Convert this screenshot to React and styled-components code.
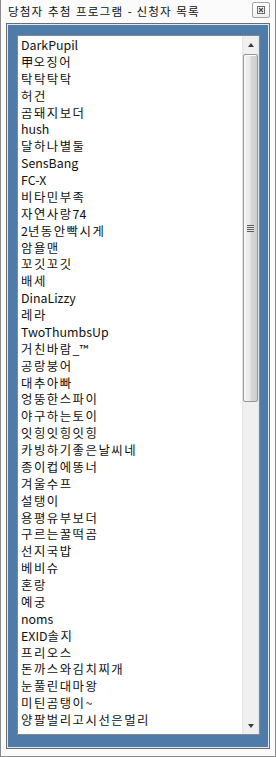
import React from 'react';
import styled, { createGlobalStyle } from 'styled-components';

const names = [
  'DarkPupil', '甲오징어', '탁탁탁탁', '허건', '곰돼지보더', 'hush', '달하나별둘',
  'SensBang', 'FC-X', '비타민부족', '자연사랑74', '2년동안빡시게', '암욜맨', '꼬깃꼬깃',
  '배세', 'DinaLizzy', '레라', 'TwoThumbsUp', '거친바람_™', '공랑붕어', '대추아빠',
  '엉뚱한스파이', '야구하는토이', '잇힝잇힝잇힝', '카빙하기좋은날씨네', '종이컵에똥너',
  '겨울수프', '설탱이', '용평유부보더', '구르는꿀떡곰', '선지국밥', '베비슈', '혼랑',
  '예궁', 'noms', 'EXID솔지', '프리오스', '돈까스와김치찌개', '눈풀린대마왕',
  '미틴곰탱이~', '양팔벌리고시선은멀리',
];

const GlobalStyle = createGlobalStyle`
  html, body {
    margin: 0;
    padding: 0;
    background: #ffffff;
  }
`;

const Window = styled.div`
  box-sizing: border-box;
  width: 276px;
  height: 757px;
  display: flex;
  flex-direction: column;
  background: #fbfbfb;
  border: 1px solid #8a8a8a;
  border-top: none;
  padding: 0 5px 7px 5px;
  font-family: "Noto Sans CJK KR", "Noto Sans", sans-serif;
`;

const TitleBar = styled.div`
  height: 23px;
  display: flex;
  align-items: center;
  justify-content: space-between;
  padding: 0 0 0 2px;
`;

const Title = styled.span`
  font-size: 11.6px;
  color: #111;
  word-spacing: 2px;
  margin-top: -2px;
`;

// Malgun Gothic sets hangul wider than Noto does, latin about the same
const Hangul = styled.span`
  letter-spacing: ${props => props.spacing}px;
`;

const CloseButton = styled.div`
  box-sizing: border-box;
  width: 18px;
  height: 16px;
  margin: -3px 0 0 0;
  border: 1px solid #a3a3a3;
  border-radius: 2px;
  background: linear-gradient(#ffffff, #f1f1f1);
  display: flex;
  align-items: center;
  justify-content: center;
`;

const Frame = styled.div`
  box-sizing: border-box;
  flex: 1;
  border: 1px solid #6c6c6c;
  box-shadow: inset 0 0 0 1px #dfe7f0;
  background: #4f7ba8;
  padding: 11px 9px 13px 10px;
  display: flex;
`;

const ListBox = styled.div`
  box-sizing: border-box;
  flex: 1;
  display: flex;
  background: #fff;
  border: 1px solid #828790;
  overflow: hidden;
`;

const Items = styled.div`
  flex: 1;
  padding: 1px 0 0 3px;
  overflow: hidden;
`;

const Item = styled.div`
  height: 16.875px;
  line-height: 16.875px;
  font-size: 12.4px;
  color: #111;
  white-space: nowrap;
`;

const ScrollBar = styled.div`
  width: 17px;
  display: flex;
  flex-direction: column;
  background: linear-gradient(90deg, #e3e3e3 0, #f0f0f0 2px, #f0f0f0 15px, #e3e3e3 17px);
`;

const ArrowButton = styled.div`
  height: 17px;
  display: flex;
  align-items: center;
  justify-content: center;
`;

const Arrow = styled.div`
  width: 0;
  height: 0;
  border-left: 3.5px solid transparent;
  border-right: 3.5px solid transparent;
  ${props => props.down
    ? 'border-top: 4px solid #3c3c3c;'
    : 'border-bottom: 4px solid #3c3c3c;'}
`;

const Track = styled.div`
  flex: 1;
  display: flex;
  flex-direction: column;
  align-items: center;
`;

const Thumb = styled.div`
  box-sizing: border-box;
  width: 15px;
  margin-top: ${props => props.offset}px;
  height: ${props => props.size}px;
  border: 1px solid #979797;
  border-radius: 2px;
  background: linear-gradient(90deg, #f3f3f3 0%, #e9e9e9 45%, #d8d8d8 55%, #cfcfcf 100%);
  box-shadow: inset 1px 1px 0 #fbfbfb;
  display: flex;
  align-items: center;
  justify-content: center;
`;

const Grip = styled.div`
  width: 7px;
  height: 7px;
  background: repeating-linear-gradient(#5a5a5a 0, #5a5a5a 1px, #e8e8e8 1px, #e8e8e8 2px);
`;

const Text = ({ children, spacing }) =>
  children.split(/([가-힣]+)/).filter(Boolean).map((part, i) =>
    /[가-힣]/.test(part)
      ? <Hangul key={i} spacing={spacing}>{part}</Hangul>
      : <React.Fragment key={i}>{part}</React.Fragment>
  );

export default function App() {
  return (
    <>
      <GlobalStyle />
      <Window>
        <TitleBar>
          <Title><Text spacing={1.1}>당첨자 추첨 프로그램 - 신청자 목록</Text></Title>
          <CloseButton>
            <svg width="8" height="8" viewBox="0 0 8 8">
              <rect x="0.5" y="0.5" width="7" height="7" fill="none" stroke="#6a6a6a" strokeWidth="1" />
              <path d="M2 2 L6 6 M6 2 L2 6" stroke="#4a4a4a" strokeWidth="1.2" />
            </svg>
          </CloseButton>
        </TitleBar>
        <Frame>
          <ListBox>
            <Items>
              {names.map(n => <Item key={n}><Text spacing={1.5}>{n}</Text></Item>)}
            </Items>
            <ScrollBar>
              <ArrowButton><Arrow /></ArrowButton>
              <Track>
                <Thumb offset={1} size={348}>
                  <Grip />
                </Thumb>
              </Track>
              <ArrowButton><Arrow down /></ArrowButton>
            </ScrollBar>
          </ListBox>
        </Frame>
      </Window>
    </>
  );
}
